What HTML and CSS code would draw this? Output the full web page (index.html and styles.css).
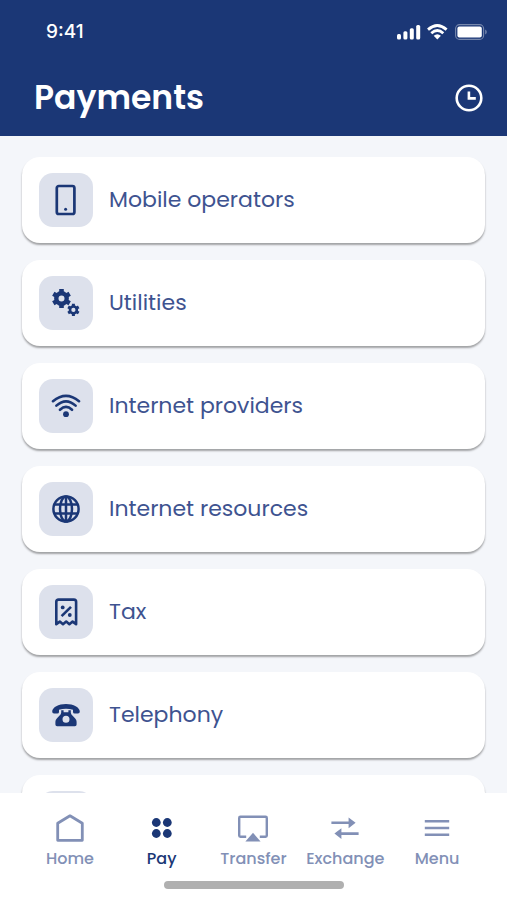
FILE: index.html
```html
<!DOCTYPE html>
<html lang="en">
<head>
<meta charset="utf-8">
<meta name="viewport" content="width=device-width, initial-scale=1">
<title>Payments</title>
<link rel="stylesheet" href="styles.css">
</head>
<body>
<div class="app">
  <header class="header">
    <div class="status">
      <span class="time">9:41</span>
      <div class="indicators">
        <svg width="24" height="16" viewBox="0 0 24 16" fill="currentColor" aria-hidden="true">
          <rect x="0" y="10" width="4" height="5.5" rx="1.5"/><rect x="6.4" y="7.2" width="4" height="8.3" rx="1.5"/><rect x="12.8" y="4.2" width="4" height="11.3" rx="1.5"/><rect x="19.2" y="1" width="4" height="14.5" rx="1.5"/>
        </svg>
        <svg width="22" height="16" viewBox="0 0 22 16" aria-hidden="true">
          <path d="M1 5.6Q10.3-2.6 19.6 5.6M4.3 9.2Q10.3 3.8 16.3 9.2" fill="none" stroke="currentColor" stroke-width="2.8"/>
          <path d="M6.7 11.8Q10.3 8.8 13.9 11.8L10.3 15.4Z" fill="currentColor"/>
        </svg>
        <svg width="32" height="16" viewBox="0 0 32 16" aria-hidden="true">
          <rect x=".6" y=".6" width="28" height="14.8" rx="4" fill="none" stroke="currentColor" stroke-opacity=".4" stroke-width="1.1"/>
          <rect x="2.4" y="2.6" width="24.4" height="10.8" rx="2" fill="currentColor"/>
          <path d="M30.2 5.4Q31.8 6.2 31.8 8T30.2 10.6Z" fill="currentColor" opacity=".4"/>
        </svg>
      </div>
    </div>
    <div class="titlebar">
      <h1 class="title">Payments</h1>
      <button class="history" type="button" aria-label="History">
        <svg width="28" height="28" viewBox="0 0 28 28" fill="none" stroke="currentColor" aria-hidden="true">
          <circle cx="14" cy="14" r="12.3" stroke-width="2.6"/><path d="M13.9 7.5V14.4H20.8" stroke-width="2.6"/>
        </svg>
      </button>
    </div>
  </header>

  <main class="content">
    <ul class="list">
      <li><a class="card" href="#mobile">
        <span class="tile"><svg width="32" height="32" viewBox="0 0 32 32" fill="none" stroke="currentColor" aria-hidden="true"><rect x="6.8" y="2" width="17.6" height="28" rx="2" stroke-width="2.7"/><circle cx="15.6" cy="25.2" r="1.5" fill="currentColor" stroke="none"/></svg></span>
        <span class="label">Mobile operators</span></a></li>
      <li><a class="card" href="#utilities">
        <span class="tile"><svg width="32" height="32" viewBox="0 0 32 32" fill="none" stroke="currentColor" aria-hidden="true">
          <circle cx="11.5" cy="11.5" r="5.2" stroke-width="4.4"/>
          <path d="M11.5 2v3.6M11.5 17.4V21M3.3 6.75l3.1 1.8M16.6 14.45l3.1 1.8M3.3 16.25l3.1-1.8M16.6 8.55l3.1-1.8" stroke-width="4.6"/>
          <circle cx="23.4" cy="22.9" r="3.4" stroke-width="2.6"/>
          <path d="M23.4 16.8v2.2M23.4 26.8V29M18.1 19.85l1.9 1.1M26.8 24.85l1.9 1.1M18.1 25.95l1.9-1.1M26.8 20.95l1.9-1.1" stroke-width="3"/></svg></span>
        <span class="label">Utilities</span></a></li>
      <li><a class="card" href="#providers">
        <span class="tile"><svg width="32" height="32" viewBox="0 0 32 32" fill="none" stroke="currentColor" stroke-width="2.6" stroke-linecap="round" aria-hidden="true"><path d="M3 11.2Q16 .6 29 11.2M6.4 15.6Q16 7 25.6 15.6M10 19.8Q16 14 22 19.8"/><circle cx="16" cy="24.2" r="2.9" fill="currentColor" stroke="none"/></svg></span>
        <span class="label">Internet providers</span></a></li>
      <li><a class="card" href="#resources">
        <span class="tile"><svg width="32" height="32" viewBox="0 0 32 32" fill="none" stroke="currentColor" stroke-width="2.5" aria-hidden="true"><circle cx="16" cy="16" r="12.6"/><ellipse cx="16" cy="16" rx="6" ry="12.6"/><path d="M16 3.5v25M4.5 11.6h23M4.5 20.4h23"/></svg></span>
        <span class="label">Internet resources</span></a></li>
      <li><a class="card" href="#tax">
        <span class="tile"><svg width="32" height="32" viewBox="0 0 32 32" fill="none" stroke="currentColor" stroke-width="2.6" stroke-linejoin="round" aria-hidden="true"><path d="M6.3 28.2V5.8Q6.3 3.6 8.5 3.6H23.9Q26.1 3.6 26.1 5.8V28.2L22.6 25.6L19.4 28.2L16.2 25.6L13 28.2L9.8 25.6Z"/><path d="M11.6 20.2L21 10.8"/><circle cx="12.7" cy="11.4" r="1.9" fill="currentColor" stroke="none"/><circle cx="19.8" cy="19" r="1.9" fill="currentColor" stroke="none"/></svg></span>
        <span class="label">Tax</span></a></li>
      <li><a class="card" href="#telephony">
        <span class="tile"><svg width="32" height="32" viewBox="0 0 32 32" fill="currentColor" aria-hidden="true"><path d="M16 5C8.5 5 2.2 8.4 2.2 12.6Q2.2 14.6 4 14.6H7.3Q9 14.6 9 12.9V10.8Q16 8.6 23 10.8V12.9Q23 14.6 24.7 14.6H28Q29.8 14.6 29.8 12.6C29.8 8.4 23.5 5 16 5Z"/><path fill-rule="evenodd" d="M11.2 11.3H13.6V13.2H18.4V11.3H20.8V13.4Q21 15.2 22.4 16.5L25.2 19.4Q26.6 20.8 26.6 22.8V25.6Q26.6 27.3 24.9 27.3H7.1Q5.4 27.3 5.4 25.6V22.8Q5.4 20.8 6.8 19.4L9.6 16.5Q11 15.2 11.2 13.4ZM16 16.7a3.5 3.5 0 1 0 0 7a3.5 3.5 0 1 0 0-7Z"/></svg></span>
        <span class="label">Telephony</span></a></li>
      <li><div class="card"><span class="tile"></span></div></li>
    </ul>
  </main>

  <footer class="footer">
    <nav class="nav">
      <a class="tab" href="#home"><svg width="32" height="32" viewBox="0 0 32 32" fill="none" stroke="currentColor" stroke-width="2.8" stroke-linejoin="round" aria-hidden="true"><path d="M3.7 28.3V11.2L16 3.8L28.3 11.2V28.3Z"/></svg>Home</a>
      <a class="tab active" href="#pay" aria-current="page"><svg width="32" height="32" viewBox="0 0 32 32" fill="currentColor" aria-hidden="true"><circle cx="10.3" cy="10.5" r="4.4"/><circle cx="21.3" cy="10.5" r="4.4"/><circle cx="10.3" cy="21.5" r="4.4"/><circle cx="21.3" cy="21.5" r="4.4"/></svg>Pay</a>
      <a class="tab" href="#transfer"><svg width="32" height="32" viewBox="0 0 32 32" fill="none" stroke="currentColor" stroke-width="2.4" stroke-linejoin="round" aria-hidden="true"><path d="M9.2 24.8H3.4Q2.2 24.8 2.2 23.6V6Q2.2 4.8 3.4 4.8H28.6Q29.8 4.8 29.8 6V23.6Q29.8 24.8 28.6 24.8H22.8"/><path d="M16 20.8L23.6 29.6H8.4Z" fill="currentColor" stroke="none"/></svg>Transfer</a>
      <a class="tab" href="#exchange"><svg width="32" height="32" viewBox="0 0 32 32" fill="none" stroke="currentColor" stroke-width="2.6" aria-hidden="true"><path d="M2.4 10.8H22M10 21.6H29.6"/><path d="M19.6 5.4L26.6 10.8L19.6 16.2ZM12.4 16.2L5.4 21.6L12.4 27Z" fill="currentColor" stroke="none"/></svg>Exchange</a>
      <a class="tab" href="#menu"><svg width="32" height="32" viewBox="0 0 32 32" fill="none" stroke="currentColor" stroke-width="2.6" aria-hidden="true"><path d="M3.8 9.2H28.2M3.8 16H28.2M3.8 22.8H28.2"/></svg>Menu</a>
    </nav>
    <div class="grip"></div>
  </footer>
</div>
</body>
</html>
```
FILE: styles.css
```css
* { box-sizing: border-box; }

body {
  margin: 0;
  font-family: Poppins, Inter, "Liberation Sans", sans-serif;
  background: #f4f6fa;
  color: #1b3776;
}

.app {
  display: flex;
  flex-direction: column;
  height: 100vh;
}

.header {
  flex: none;
  padding: 20px 20px 16px 22px;
  background: #1b3776;
  color: #fff;
}

.status {
  display: flex;
  align-items: center;
  justify-content: space-between;
  height: 24px;
  padding-left: 24px;
}

.time {
  font-family: Inter, "Liberation Sans", sans-serif;
  font-size: 19px;
  font-weight: 500;
  line-height: 24px;
}

.indicators {
  display: flex;
  gap: 6px;
}

.titlebar {
  display: flex;
  align-items: center;
  justify-content: space-between;
  margin-top: 32px;
  padding: 0 2px 0 12px;
}

.title {
  margin: 0;
  font-size: 33px;
  font-weight: 600;
  line-height: 44px;
}

.history {
  display: flex;
  padding: 2px;
  border: 0;
  background: none;
  color: inherit;
}

.content {
  flex: 1;
  min-height: 0;
  overflow-y: auto;
  scrollbar-width: none;
}

.list {
  display: grid;
  gap: 17px;
  margin: 0;
  padding: 21px 22px 16px;
  list-style: none;
}

.card {
  display: flex;
  align-items: center;
  gap: 16px;
  height: 86px;
  padding: 0 17px;
  border-radius: 18px;
  background: #fff;
  box-shadow: 0 2px 2px rgba(0, 0, 0, 0.34);
  color: #3e5390;
  text-decoration: none;
}

.tile {
  display: grid;
  place-items: center;
  width: 54px;
  height: 54px;
  border-radius: 14px;
  background: #dde1ec;
  color: #1b3776;
}

.label {
  font-size: 22px;
  line-height: 32px;
}

.footer {
  flex: none;
  padding: 19px 24px 11px;
  background: #fff;
}

.nav {
  display: grid;
  grid-template-columns: repeat(5, 1fr);
}

.tab {
  display: flex;
  flex-direction: column;
  align-items: center;
  gap: 3px;
  color: #8290b6;
  font-size: 16px;
  font-weight: 500;
  line-height: 24px;
  text-decoration: none;
}

.active { color: #1b3776; }

.grip {
  width: 180px;
  height: 8px;
  margin: 10px auto 0;
  border-radius: 4px;
  background: #b0b0b0;
}
```
